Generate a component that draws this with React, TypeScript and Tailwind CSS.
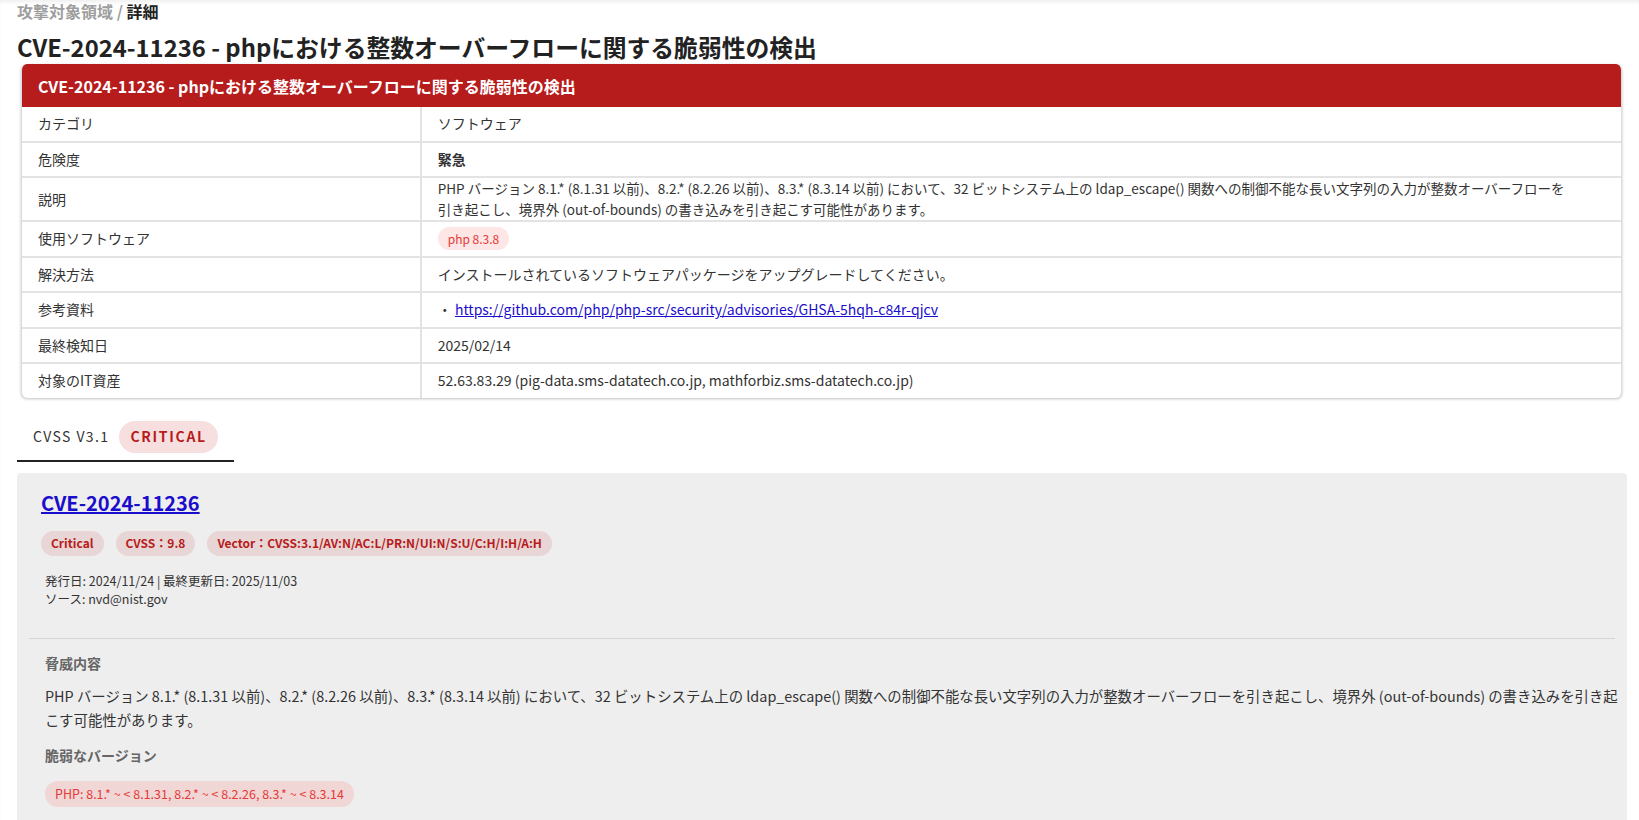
const rows: { label: string; value: React.ReactNode; long?: boolean }[] = [
	{ label: "カテゴリ", value: "ソフトウェア" },
	{ label: "危険度", value: <span className="font-bold">緊急</span> },
	{
		label: "説明",
		long: true,
		value:
			"PHP バージョン 8.1.* (8.1.31 以前)、8.2.* (8.2.26 以前)、8.3.* (8.3.14 以前) において、32 ビットシステム上の ldap_escape() 関数への制御不能な長い文字列の入力が整数オーバーフローを引き起こし、境界外 (out-of-bounds) の書き込みを引き起こす可能性があります。",
	},
	{
		label: "使用ソフトウェア",
		value: (
			<span className="inline-flex h-[23px] items-center rounded-full bg-[#fde6e6] px-[10px] text-[12px] text-[#e53935]">
				php 8.3.8
			</span>
		),
	},
	{
		label: "解決方法",
		value: "インストールされているソフトウェアパッケージをアップグレードしてください。",
	},
	{
		label: "参考資料",
		value: (
			<span>
				・{" "}
				<a href="#" className="text-[#1a0dcc] underline">
					https://github.com/php/php-src/security/advisories/GHSA-5hqh-c84r-qjcv
				</a>
			</span>
		),
	},
	{ label: "最終検知日", value: "2025/02/14" },
	{
		label: "対象のIT資産",
		value: "52.63.83.29 (pig-data.sms-datatech.co.jp, mathforbiz.sms-datatech.co.jp)",
	},
];

const chips = ["Critical", "CVSS：9.8", "Vector：CVSS:3.1/AV:N/AC:L/PR:N/UI:N/S:U/C:H/I:H/A:H"];

const description =
	"PHP バージョン 8.1.* (8.1.31 以前)、8.2.* (8.2.26 以前)、8.3.* (8.3.14 以前) において、32 ビットシステム上の ldap_escape() 関数への制御不能な長い文字列の入力が整数オーバーフローを引き起こし、境界外 (out-of-bounds) の書き込みを引き起こす可能性があります。";

export default function App() {
	return (
		<div className="min-h-screen bg-white pl-[17px] pr-[12px] font-['Noto_Sans_CJK_JP','Noto_Sans',sans-serif] text-[#333] shadow-[inset_0_4px_4px_-2px_rgba(0,0,0,0.07)]">
			{/* Breadcrumb */}
			<div className="pt-[1px] text-[16px] leading-5 font-bold">
				<span className="text-[#9e9e9e]">攻撃対象領域 / </span>
				<span className="text-[#222]">詳細</span>
			</div>

			<h1 className="mt-[10px] text-[23.8px] leading-8 font-bold text-[#222]">
				CVE-2024-11236 - phpにおける整数オーバーフローに関する脆弱性の検出
			</h1>

			{/* Detail card */}
			<div className="mt-[1px] ml-1 mr-[5px] overflow-hidden rounded-md border-x border-[#dcdcdc] bg-white shadow-[0_1px_3px_rgba(0,0,0,0.25)]">
				<div className="flex h-[43px] items-center bg-[#b71c1c] px-4 text-[16px] font-bold text-white">
					CVE-2024-11236 - phpにおける整数オーバーフローに関する脆弱性の検出
				</div>
				{rows.map((row, i) => (
					<div
						key={i}
						className={`flex text-[14px] leading-[21px] ${i < rows.length - 1 ? "border-b-2 border-[#e3e3e3]" : ""}`}
					>
						<div className="flex min-h-[33.5px] w-1/4 items-center border-r-2 border-[#e3e3e3] px-4">
							{row.label}
						</div>
						<div
							className={`flex min-h-[33.5px] w-3/4 items-center pl-4 ${row.long ? "pr-12 text-[13.5px]" : "pr-3"}`}
						>
							<div>{row.value}</div>
						</div>
					</div>
				))}
			</div>

			{/* Tabs */}
			<div className="mt-4 flex">
				<div className="flex h-[48px] items-center gap-[10px] border-b-2 border-[#222] px-4">
					<span className="text-[14px] font-normal tracking-[0.1em] text-[#333]">CVSS V3.1</span>
					<span className="inline-flex h-[32px] items-center rounded-full bg-[#f8dfdf] px-[11px] text-[14px] font-bold tracking-[0.12em] text-[#b71c1c]">
						CRITICAL
					</span>
				</div>
			</div>

			{/* CVSS panel */}
			<div className="mt-[11px] rounded bg-[#eeeeee] pb-10">
				<div className="px-6 pt-4 pb-[30px]">
					<a href="#" className="block text-[20px] leading-7 font-bold text-[#1a0dcc] underline">
						CVE-2024-11236
					</a>
					<div className="mt-[14px] flex gap-3">
						{chips.map((c) => (
							<span
								key={c}
								className="inline-flex h-[25px] items-center rounded-full bg-[#e8d5d5] px-[10px] text-[12px] font-bold text-[#b71c1c]"
							>
								{c}
							</span>
						))}
					</div>
					<div className="mt-4 pl-1 text-[12.5px] leading-[18px] text-[#333]">
						<div>発行日: 2024/11/24 | 最終更新日: 2025/11/03</div>
						<div>ソース: nvd@nist.gov</div>
					</div>
				</div>
				<div className="mx-3 border-t border-[#d4d4d4]" />
				<div className="pl-[28px] pt-[14px]">
					<h3 className="text-[14px] leading-5 font-bold text-[#666]">脅威内容</h3>
					<p className="mt-[11px] text-[14.4px] leading-6 text-[#333]">{description}</p>
					<h3 className="mt-[13px] text-[14px] leading-5 font-bold text-[#666]">脆弱なバージョン</h3>
					<div className="mt-[15px]">
						<span className="inline-flex h-[26px] items-center rounded-full bg-[#f1d6d6] px-[10px] text-[12.5px] text-[#e53935]">
							PHP: 8.1.* ~ &lt; 8.1.31, 8.2.* ~ &lt; 8.2.26, 8.3.* ~ &lt; 8.3.14
						</span>
					</div>
				</div>
			</div>
		</div>
	);
}
